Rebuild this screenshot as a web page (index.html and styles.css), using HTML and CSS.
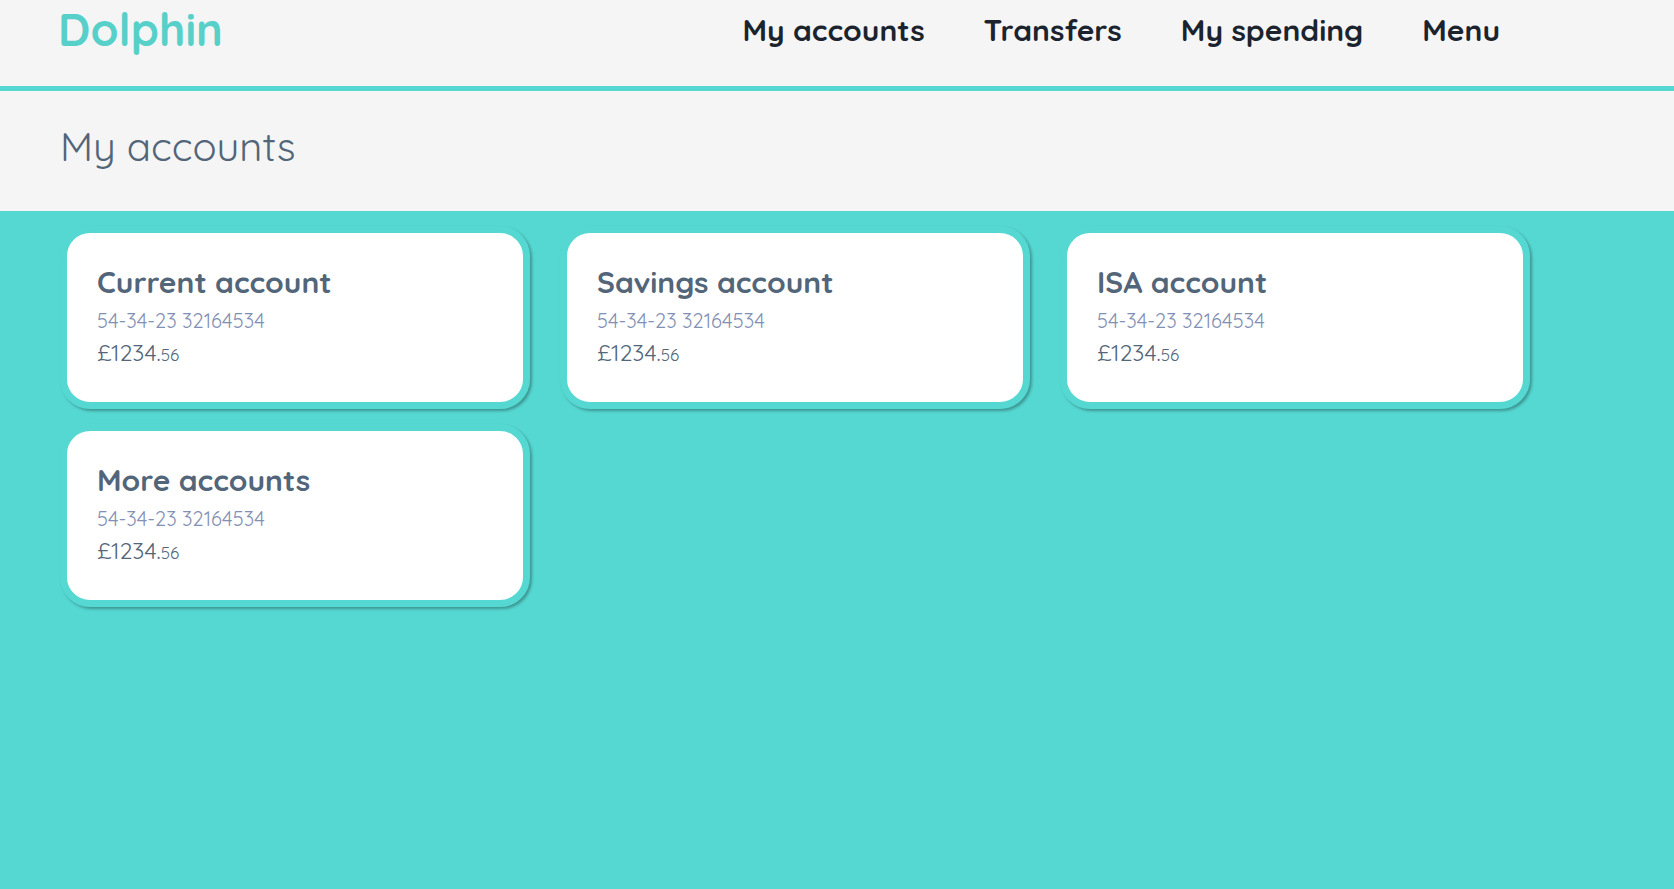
FILE: index.html
```html
<!DOCTYPE html>
<html lang="en">
<head>
<meta charset="utf-8">
<title>Dolphin</title>
<meta name="viewport" content="width=device-width, initial-scale=1">
<link rel="stylesheet" href="styles.css">
</head>
<body>
<header class="site-header">
  <a class="logo" href="#">Dolphin</a>
  <nav class="main-nav">
    <a href="#">My accounts</a>
    <a href="#">Transfers</a>
    <a href="#">My spending</a>
    <a href="#">Menu</a>
  </nav>
</header>
<main>
  <div class="page-title"><h1>My accounts</h1></div>
  <section class="accounts">
    <article class="card">
      <h2>Current account</h2>
      <p class="number">54-34-23 32164534</p>
      <p class="balance">£1234.<span class="pence">56</span></p>
    </article>
    <article class="card">
      <h2>Savings account</h2>
      <p class="number">54-34-23 32164534</p>
      <p class="balance">£1234.<span class="pence">56</span></p>
    </article>
    <article class="card">
      <h2>ISA account</h2>
      <p class="number">54-34-23 32164534</p>
      <p class="balance">£1234.<span class="pence">56</span></p>
    </article>
    <article class="card">
      <h2>More accounts</h2>
      <p class="number">54-34-23 32164534</p>
      <p class="balance">£1234.<span class="pence">56</span></p>
    </article>
  </section>
</main>
</body>
</html>
```
FILE: styles.css
```css
* {
  box-sizing: border-box;
}

body {
  margin: 0;
  background: #56d8d2;
  color: #526579;
  font-family: Quicksand, Inter, sans-serif;
}

h1, h2, p {
  margin: 0;
}

a {
  text-decoration: none;
}

.site-header {
  display: flex;
  justify-content: space-between;
  align-items: flex-start;
  padding: 0 174px 26px 58px;
  background: #f5f5f5;
  border-bottom: 5px solid #56d8d2;
}

.logo {
  color: #57d0ca;
  font-size: 45px;
  font-weight: 700;
  line-height: 58px;
}

.main-nav {
  display: flex;
  gap: 59px;
}

.main-nav a {
  color: #1b242e;
  font-size: 30px;
  font-weight: 700;
  line-height: 60px;
}

.page-title {
  padding: 30px 60px 40px;
  background: #f5f5f5;
}

.page-title h1 {
  font-size: 40px;
  font-weight: 400;
  line-height: 50px;
}

.accounts {
  display: grid;
  grid-template-columns: repeat(3, 1fr);
  gap: 15px 30px;
  padding: 15px 144px 15px 60px;
}

.card {
  padding: 30px 30px 37px;
  background: #fff;
  border: 7px solid #56d8d2;
  border-radius: 30px;
  box-shadow: 2px 2px 3px rgba(0, 0, 0, 0.3);
}

.card h2 {
  font-size: 30px;
  font-weight: 700;
  line-height: 38px;
}

.number {
  color: #8290b5;
  font-size: 20px;
  font-weight: 400;
  line-height: 40px;
}

.balance {
  font-size: 23px;
  font-weight: 400;
  line-height: 24px;
}

.pence {
  font-size: 17px;
  line-height: 1;
}
```
